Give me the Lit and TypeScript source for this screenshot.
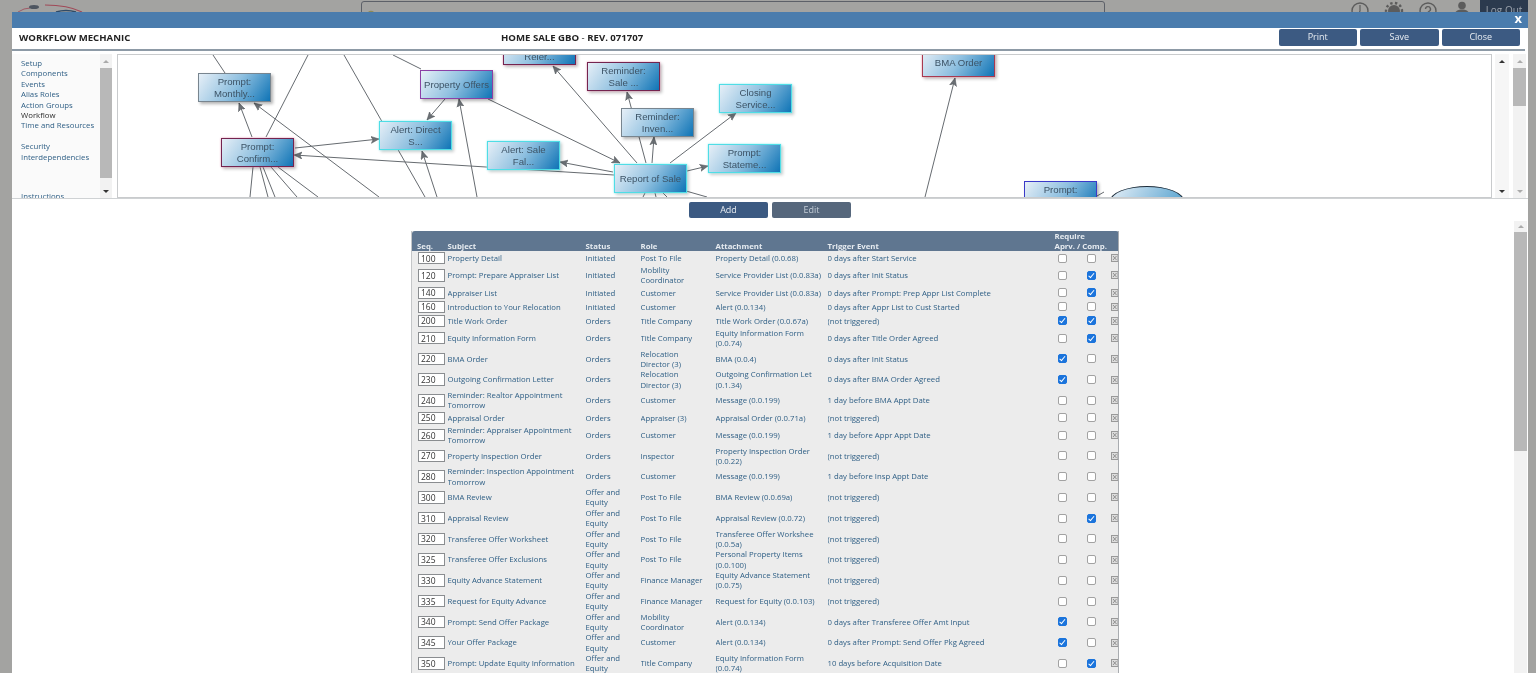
import { LitElement, css, html, svg } from 'lit';
import { customElement } from 'lit/decorators.js';

interface FlowNode {
  x: number;
  y: number;
  label: string;
  tone: string;
}

type Row = [string, string, string, string, string, string, boolean, boolean];

// diagram coordinates are page px minus the canvas origin (118, 55)
const NODES: FlowNode[] = [
  { x: 80, y: 18, label: 'Prompt:\nMonthly...', tone: 'gray' },
  { x: 302, y: 15, label: 'Property Offers', tone: 'purple' },
  { x: 103, y: 83, label: 'Prompt:\nConfirm...', tone: 'crimson' },
  { x: 261, y: 66, label: 'Alert: Direct\nS...', tone: 'cyan' },
  { x: 369, y: 86, label: 'Alert: Sale\nFal...', tone: 'cyan' },
  { x: 385, y: -19, label: 'Prompt:\nReler...', tone: 'crimson' },
  { x: 469, y: 7, label: 'Reminder:\nSale ...', tone: 'crimson' },
  { x: 503, y: 53, label: 'Reminder:\nInven...', tone: 'gray' },
  { x: 601, y: 29, label: 'Closing\nService...', tone: 'cyan' },
  { x: 590, y: 89, label: 'Prompt:\nStateme...', tone: 'cyan' },
  { x: 496, y: 109, label: 'Report of Sale', tone: 'cyan' },
  { x: 804, y: -7, label: 'BMA Order', tone: 'red' },
  { x: 906, y: 126, label: 'Prompt:\nDocs...', tone: 'blue' },
];

// page coordinates: x1 y1 x2 y2, last flag adds an arrow head
const EDGES: [number, number, number, number, boolean][] = [
  [213, 55, 225, 73, false],
  [308, 55, 266, 137, false],
  [344, 55, 425, 197, false],
  [393, 55, 421, 69, false],
  [252, 137, 239, 103, true],
  [379, 197, 254, 103, true],
  [295, 148, 379, 139, true],
  [614, 175, 294, 155, true],
  [445, 99, 427, 120, true],
  [477, 197, 459, 99, true],
  [437, 197, 422, 151, true],
  [488, 99, 620, 163, true],
  [253, 167, 250, 197, false],
  [260, 167, 268, 197, false],
  [263, 167, 275, 197, false],
  [271, 167, 297, 197, false],
  [278, 167, 318, 197, false],
  [637, 163, 553, 66, true],
  [646, 163, 627, 92, true],
  [652, 163, 654, 137, true],
  [670, 163, 736, 113, true],
  [687, 171, 708, 166, true],
  [613, 172, 560, 162, true],
  [645, 193, 643, 197, false],
  [655, 193, 656, 197, false],
  [663, 193, 667, 197, false],
  [686, 191, 707, 197, false],
  [925, 197, 955, 78, true],
  [1097, 196, 1104, 192, false],
];

const NAV = [
  'Setup',
  'Components',
  'Events',
  'Alias Roles',
  'Action Groups',
  'Workflow',
  'Time and Resources',
  '',
  'Security',
  'Interdependencies',
  '',
  '',
  'Instructions',
];

const OE = 'Offer and\nEquity';
const NT = '(not triggered)';

const ROWS: Row[] = [
  ['100', 'Property Detail', 'Initiated', 'Post To File', 'Property Detail (0.0.68)', '0 days after Start Service', false, false],
  ['120', 'Prompt: Prepare Appraiser List', 'Initiated', 'Mobility\nCoordinator', 'Service Provider List (0.0.83a)', '0 days after Init Status', false, true],
  ['140', 'Appraiser List', 'Initiated', 'Customer', 'Service Provider List (0.0.83a)', '0 days after Prompt: Prep Appr List Complete', false, true],
  ['160', 'Introduction to Your Relocation', 'Initiated', 'Customer', 'Alert (0.0.134)', '0 days after Appr List to Cust Started', false, false],
  ['200', 'Title Work Order', 'Orders', 'Title Company', 'Title Work Order (0.0.67a)', NT, true, true],
  ['210', 'Equity Information Form', 'Orders', 'Title Company', 'Equity Information Form\n(0.0.74)', '0 days after Title Order Agreed', false, true],
  ['220', 'BMA Order', 'Orders', 'Relocation\nDirector (3)', 'BMA (0.0.4)', '0 days after Init Status', true, false],
  ['230', 'Outgoing Confirmation Letter', 'Orders', 'Relocation\nDirector (3)', 'Outgoing Confirmation Let\n(0.1.34)', '0 days after BMA Order Agreed', true, false],
  ['240', 'Reminder: Realtor Appointment\nTomorrow', 'Orders', 'Customer', 'Message (0.0.199)', '1 day before BMA Appt Date', false, false],
  ['250', 'Appraisal Order', 'Orders', 'Appraiser (3)', 'Appraisal Order (0.0.71a)', NT, false, false],
  ['260', 'Reminder: Appraiser Appointment\nTomorrow', 'Orders', 'Customer', 'Message (0.0.199)', '1 day before Appr Appt Date', false, false],
  ['270', 'Property Inspection Order', 'Orders', 'Inspector', 'Property Inspection Order\n(0.0.22)', NT, false, false],
  ['280', 'Reminder: Inspection Appointment\nTomorrow', 'Orders', 'Customer', 'Message (0.0.199)', '1 day before Insp Appt Date', false, false],
  ['300', 'BMA Review', OE, 'Post To File', 'BMA Review (0.0.69a)', NT, false, false],
  ['310', 'Appraisal Review', OE, 'Post To File', 'Appraisal Review (0.0.72)', NT, false, true],
  ['320', 'Transferee Offer Worksheet', OE, 'Post To File', 'Transferee Offer Workshee\n(0.0.5a)', NT, false, false],
  ['325', 'Transferee Offer Exclusions', OE, 'Post To File', 'Personal Property Items\n(0.0.100)', NT, false, false],
  ['330', 'Equity Advance Statement', OE, 'Finance Manager', 'Equity Advance Statement\n(0.0.75)', NT, false, false],
  ['335', 'Request for Equity Advance', OE, 'Finance Manager', 'Request for Equity (0.0.103)', NT, false, false],
  ['340', 'Prompt: Send Offer Package', OE, 'Mobility\nCoordinator', 'Alert (0.0.134)', '0 days after Transferee Offer Amt Input', true, false],
  ['345', 'Your Offer Package', OE, 'Customer', 'Alert (0.0.134)', '0 days after Prompt: Send Offer Pkg Agreed', true, false],
  ['350', 'Prompt: Update Equity Information', OE, 'Title Company', 'Equity Information Form\n(0.0.74)', '10 days before Acquisition Date', false, true],
];

@customElement('app-root')
export class AppRoot extends LitElement {
  private scrollbar(cls: string) {
    return html`
      <div class="sb ${cls}">
        <span class="arrow up"></span>
        <div class="track"><div class="thumb"></div></div>
        <span class="arrow down"></span>
      </div>
    `;
  }

  private renderTopbar() {
    return html`
      <div class="topbar">
        <svg class="logo" width="100" height="20" viewBox="0 0 100 20">
          <path d="M18 12 Q24 8 30 8" fill="none" stroke="#a05a66" stroke-width="1" />
          <ellipse cx="34" cy="7" rx="5" ry="2" fill="#4d5560" />
          <path d="M45 5 Q68 5 82 12" fill="none" stroke="#a04a58" stroke-width="1.2" />
          <path d="M56 12 Q66 9 76 12" fill="none" stroke="#2f4a66" stroke-width="1.6" />
        </svg>
        <div class="search">
          <svg width="12" height="12" viewBox="0 0 12 12">
            <circle cx="6" cy="7" r="3.6" fill="none" stroke="#8f8a55" stroke-width="1.2" />
          </svg>
        </div>
        <div class="tools">
          <svg width="22" height="22" viewBox="0 0 22 22">
            <circle cx="11" cy="11" r="8" fill="none" stroke="#555" stroke-width="1.4" />
            <path d="M11 5v6l-2 5" fill="none" stroke="#555" stroke-width="1.2" />
          </svg>
          <svg width="22" height="22" viewBox="0 0 22 22">
            <circle cx="11" cy="11" r="6" fill="#555" />
            <circle cx="11" cy="11" r="8" fill="none" stroke="#555" stroke-width="2.4" stroke-dasharray="2.4 2.4" />
          </svg>
          <svg width="22" height="22" viewBox="0 0 22 22">
            <circle cx="11" cy="11" r="8" fill="none" stroke="#555" stroke-width="1.4" />
            <path d="M8.5 9a2.5 2.5 0 1 1 3.5 2.4c-.8.4-1 .9-1 1.8" fill="none" stroke="#555" stroke-width="1.4" />
          </svg>
          <svg width="22" height="22" viewBox="0 0 22 22">
            <circle cx="11" cy="5.5" r="3.8" fill="#555" />
            <path d="M2 18c1-6 4-8.5 9-8.5s8 2.5 9 8.5z" fill="#555" />
          </svg>
        </div>
        <div class="logout">Log Out</div>
      </div>
    `;
  }

  private renderDiagram() {
    return html`
      <div class="canvas">
        <svg class="edges" width="1375" height="144" viewBox="118 55 1375 144">
          <defs>
            <marker id="head" markerWidth="9" markerHeight="8" refX="8" refY="4" orient="auto" markerUnits="userSpaceOnUse">
              <path d="M0 0.5 L8 4 L0 7.5 L2 4 Z" fill="#6b7075" stroke="#4f5458" stroke-width=".5" />
            </marker>
          </defs>
          ${EDGES.map(
            ([x1, y1, x2, y2, arrow]) =>
              svg`<line x1=${x1} y1=${y1} x2=${x2} y2=${y2} stroke="#666b70" stroke-width="1" marker-end=${arrow ? 'url(#head)' : ''} />`,
          )}
        </svg>
        ${NODES.map(
          (n) => html`<div class="node ${n.tone}" style="left:${n.x}px;top:${n.y}px">${n.label}</div>`,
        )}
        <div class="ellipse"></div>
      </div>
    `;
  }

  private renderTable() {
    return html`
      <table>
        <colgroup>
          <col style="width:36px" />
          <col style="width:138px" />
          <col style="width:55px" />
          <col style="width:75px" />
          <col style="width:112px" />
          <col style="width:222px" />
          <col style="width:29px" />
          <col style="width:29px" />
          <col style="width:11px" />
        </colgroup>
        <thead>
          <tr>
            <th class="seqh">Seq.</th>
            <th>Subject</th>
            <th>Status</th>
            <th>Role</th>
            <th>Attachment</th>
            <th>Trigger Event</th>
            <th colspan="3" class="req">Require<br />Aprv. / Comp.</th>
          </tr>
        </thead>
        <tbody>
          ${ROWS.map(
            (r) => html`
              <tr>
                <td><div class="seq"><input .value=${r[0]} /></div></td>
                <td class="t">${r[1]}</td>
                <td class="t">${r[2]}</td>
                <td class="t">${r[3]}</td>
                <td class="t">${r[4]}</td>
                <td class="t">${r[5]}</td>
                <td class="chk"><input type="checkbox" .checked=${r[6]} /></td>
                <td class="chk"><input type="checkbox" .checked=${r[7]} /></td>
                <td class="del">
                  <svg width="7" height="8" viewBox="0 0 7 8">
                    <rect x=".5" y=".5" width="6.5" height="7" fill="#ddd" stroke="#999" />
                    <path d="M2 2l3.5 4M5.5 2L2 6" stroke="#888" stroke-width=".9" />
                  </svg>
                </td>
              </tr>
            `,
          )}
        </tbody>
      </table>
    `;
  }

  render() {
    return html`
      ${this.renderTopbar()}
      <div class="modal">
        <div class="titlebar"><span class="x">x</span></div>
        <div class="head">
          <div class="h-left">WORKFLOW MECHANIC</div>
          <div class="h-mid">HOME SALE GBO <span class="dash">-</span> REV. 071707</div>
          <div class="h-btns">
            <button>Print</button>
            <button>Save</button>
            <button>Close</button>
          </div>
        </div>
        <div class="upper">
          <div class="nav">
            ${NAV.map(
              (n) => html`<div class="nav-item ${n === 'Workflow' ? 'cur' : ''}">${n || '\u00a0'}</div>`,
            )}
          </div>
          ${this.scrollbar('sb-nav')}
          ${this.renderDiagram()}
          ${this.scrollbar('sb-canvas')}
          ${this.scrollbar('sb-outer')}
        </div>
        <div class="actions">
          <button>Add</button>
          <button class="edit">Edit</button>
        </div>
        <div class="lower">
          <div class="table-wrap">${this.renderTable()}</div>
          ${this.scrollbar('sb-lower')}
        </div>
      </div>
    `;
  }

  static styles = css`
    :host {
      display: block;
      position: relative;
      width: 100%;
      height: 673px;
      overflow: hidden;
      background: #a3a3a1;
      font-family: 'Open Sans', 'Liberation Sans', sans-serif;
      filter: blur(0.35px);
    }

    .topbar {
      display: flex;
      align-items: flex-start;
      height: 30px;
    }
    .logo {
      flex: none;
      margin-right: 261px;
    }
    .search {
      flex: none;
      width: 744px;
      height: 22px;
      margin-top: 1px;
      box-sizing: border-box;
      border: 1px solid #5c6068;
      border-radius: 3px;
      padding: 1px 0 0 3px;
    }
    .tools {
      flex: none;
      display: flex;
      gap: 12px;
      margin: 0 0 0 244px;
      opacity: 0.9;
    }
    .logout {
      flex: none;
      width: 48px;
      height: 22px;
      margin-left: 7px;
      background: #2b3a4e;
      color: #9aa2ac;
      font-size: 10px;
      line-height: 21px;
      text-align: center;
    }

    .modal {
      position: absolute;
      left: 12px;
      top: 12px;
      right: 8px;
      bottom: 0;
      display: flex;
      flex-direction: column;
      background: #fff;
    }
    .titlebar {
      flex: none;
      height: 16px;
      background: #4a7cad;
      display: flex;
      justify-content: flex-end;
    }
    .x {
      color: #fff;
      font-weight: 700;
      font-size: 13px;
      line-height: 13px;
      padding-right: 6px;
    }
    .head {
      flex: none;
      height: 21px;
      margin-right: 3px;
      padding-left: 7px;
      display: flex;
      border-bottom: 2px solid #8d9aa6;
      box-sizing: content-box;
      color: #222;
      font-weight: 700;
      font-size: 9.6px;
      line-height: 20px;
    }
    .h-left {
      width: 482px;
    }
    .h-mid {
      flex: 1;
    }
    .dash {
      font-weight: 400;
    }
    .h-btns {
      display: flex;
      gap: 3px;
      padding: 1px 5px 0 0;
    }
    button {
      width: 78.5px;
      height: 16.5px;
      padding: 0;
      border: none;
      border-radius: 2px;
      background: #3c5a82;
      color: #e8edf2;
      font-family: inherit;
      font-size: 9px;
      line-height: 16px;
    }

    .upper {
      flex: none;
      height: 144px;
      margin-top: 3px;
      display: flex;
      border-bottom: 1px solid #cfd2d4;
    }
    .nav {
      flex: none;
      width: 79px;
      padding: 4px 0 0 9px;
      overflow: hidden;
      background: #fafafa;
      color: #2f5f85;
      font-size: 7.8px;
      line-height: 10.4px;
      white-space: nowrap;
    }
    .nav-item.cur {
      color: #2c2c2c;
    }
    .nav-item:last-child {
      margin-top: 8px;
    }

    .sb {
      flex: none;
      display: flex;
      flex-direction: column;
      background: #f2f2f2;
    }
    .arrow {
      flex: none;
      height: 14px;
      display: flex;
      align-items: center;
      justify-content: center;
    }
    .arrow::before {
      content: '';
      border-left: 3px solid transparent;
      border-right: 3px solid transparent;
    }
    .arrow.up::before {
      border-bottom: 3px solid #aaa;
    }
    .arrow.down::before {
      border-top: 3px solid #333;
    }
    .track {
      flex: 1;
      min-height: 0;
    }
    .thumb {
      background: #b8b8b8;
    }
    .sb-nav {
      width: 12px;
      margin-right: 5px;
    }
    .sb-nav .thumb {
      height: 110px;
    }
    .sb-canvas {
      width: 14px;
      margin: 0 3px 0 3px;
      background: #f6f6f6;
    }
    .sb-canvas .arrow.up::before {
      border-bottom-color: #333;
    }
    .sb-canvas .thumb {
      display: none;
    }
    .sb-outer {
      width: 13px;
      margin-left: 1px;
    }
    .sb-outer .thumb {
      height: 38px;
    }
    .sb-outer .arrow.down::before {
      border-top-color: #aaa;
    }

    .canvas {
      flex: none;
      position: relative;
      width: 1375px;
      height: 144px;
      box-sizing: border-box;
      border: 1px solid #c9cbcd;
      overflow: hidden;
      background: #fff;
    }
    .edges {
      position: absolute;
      left: 0;
      top: 0;
    }
    .node {
      position: absolute;
      width: 73px;
      height: 29px;
      box-sizing: border-box;
      display: flex;
      align-items: center;
      justify-content: center;
      border: 1.5px solid #777;
      background: linear-gradient(125deg, #e6eff7 0%, #8fc0e0 50%, #0f74b6 100%);
      box-shadow: 2px 2px 3px rgba(0, 0, 0, 0.3);
      color: #3c5366;
      font-family: 'Liberation Sans', Arial, sans-serif;
      font-size: 9.6px;
      line-height: 11.5px;
      text-align: center;
      white-space: pre-line;
    }
    .node.gray {
      border-color: #78858f;
    }
    .node.purple {
      border-color: #8b3fa6;
    }
    .node.crimson {
      border-color: #74244f;
      box-shadow: 0 0 2px #e79ab8, 2px 2px 3px rgba(0, 0, 0, 0.25);
    }
    .node.red {
      border-color: #a83a50;
      box-shadow: 0 0 2px #ee9aa8, 2px 2px 3px rgba(0, 0, 0, 0.25);
    }
    .node.cyan {
      border-color: #4fdde6;
      box-shadow: 0 0 2px #8eeef2, 2px 2px 3px rgba(0, 0, 0, 0.2);
    }
    .node.blue {
      border-color: #3a3ac8;
    }
    .ellipse {
      position: absolute;
      left: 992px;
      top: 131px;
      width: 74px;
      height: 30px;
      box-sizing: border-box;
      border: 1.5px solid #1c2c3a;
      border-radius: 50%;
      background: linear-gradient(125deg, #e6eff7, #4a9ccc);
    }

    .actions {
      flex: none;
      height: 22px;
      display: flex;
      justify-content: center;
      gap: 4px;
      padding-top: 2.5px;
      box-sizing: border-box;
    }
    .actions button {
      width: 79px;
    }
    .actions .edit {
      background: #56677c;
      color: #c3ccd6;
    }

    .lower {
      flex: 1;
      min-height: 0;
      display: flex;
      overflow: hidden;
    }
    .table-wrap {
      flex: 1;
      min-width: 0;
      padding: 10px 0 0 399px;
      overflow: hidden;
    }
    .sb-lower {
      width: 13px;
      height: 600px;
      margin-right: 1px;
    }
    .sb-lower .arrow.up {
      height: 11px;
    }
    .sb-lower .thumb {
      height: 219px;
    }

    table {
      width: 707px;
      table-layout: fixed;
      border-collapse: collapse;
      background: #ececec;
      border-right: 1px solid #a9acb0;
      border-left: 1px solid #c4c6c8;
      color: #2f5f85;
      font-size: 7.75px;
      line-height: 10.37px;
    }
    th {
      height: 20px;
      padding: 0;
      background: #5f7690;
      color: #e6ebf0;
      font-size: 7.8px;
      font-weight: 700;
      line-height: 9.5px;
      text-align: left;
      vertical-align: bottom;
    }
    th:first-child {
      border-top-left-radius: 3px;
    }
    th:last-child {
      border-top-right-radius: 3px;
    }
    th.seqh {
      padding-left: 5px;
    }
    th.req {
      padding-left: 5px;
      white-space: nowrap;
    }
    td {
      padding: 0;
      overflow: hidden;
      vertical-align: middle;
    }
    td.t {
      white-space: pre;
    }
    .seq {
      height: 14px;
      display: flex;
      align-items: center;
      padding-left: 6px;
    }
    .seq input {
      width: 26.5px;
      height: 12.5px;
      box-sizing: border-box;
      padding: 0 0 0 2px;
      border: 1px solid #8a8d90;
      border-radius: 0;
      background: #fff;
      color: #333;
      font-family: inherit;
      font-size: 8.5px;
    }
    td.chk {
      padding-left: 8px;
    }
    td.chk input {
      appearance: none;
      display: block;
      position: relative;
      box-sizing: border-box;
      width: 9px;
      height: 9px;
      margin: 0;
      border: 1px solid #a2a2a2;
      border-radius: 2px;
      background: #fff;
    }
    td.chk input:checked {
      border-color: #1b74dc;
      background: #1b74dc;
    }
    td.chk input:checked::after {
      content: '';
      position: absolute;
      left: 2px;
      top: 0;
      width: 2px;
      height: 4.5px;
      border: solid #fff;
      border-width: 0 1.3px 1.3px 0;
      transform: rotate(40deg);
    }
    td.del {
      padding-left: 3px;
    }
    td.del svg {
      display: block;
    }
  `;
}
